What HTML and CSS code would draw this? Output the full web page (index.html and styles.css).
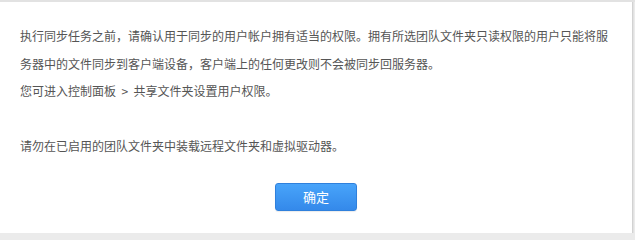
FILE: index.html
```html
<!DOCTYPE html>
<html lang="zh-CN">
<head>
<meta charset="utf-8">
<link rel="stylesheet" href="styles.css">
</head>
<body>
<div class="backdrop"></div>
<div class="dialog">
  <div class="content">
    <p class="msg">执行同步任务之前，请确认用于同步的用户帐户拥有适当的权限。拥有所选团队文件夹只读权限的用户只能将服务器中的文件同步到客户端设备，客户端上的任何更改则不会被同步回服务器。<br>您可进入控制面板&nbsp;&nbsp;&gt;&nbsp;&nbsp;共享文件夹设置用户权限。</p>
    <p class="msg msg-gap">请勿在已启用的团队文件夹中装载远程文件夹和虚拟驱动器。</p>
  </div>
  <div class="actions">
    <button class="btn-primary">确定</button>
  </div>
</div>
</body>
</html>
```
FILE: styles.css
```css
html, body {
  margin: 0;
  padding: 0;
}
body {
  width: 635px;
  height: 233px;
  overflow: hidden;
  background: #ebebeb;
  font-family: "Noto Sans CJK SC", "Noto Sans", "Liberation Sans", sans-serif;
}
.backdrop {
  height: 2px;
  width: 635px;
  background: #e2e2e2;
}
.dialog {
  width: 632px;
  height: 231px;
  background: #ffffff;
  box-shadow: 1px 0 0 #d2d2d2, 2px 0 0 #e2e2e2;
  display: flex;
  flex-direction: column;
}
.content {
  padding: 20px 0 0 20px;
  width: 596px;
}
.msg {
  margin: 0;
  font-size: 12px;
  line-height: 27.5px;
  color: #555555;
}
.msg-gap {
  margin-top: 27.5px;
}
.actions {
  display: flex;
  justify-content: center;
  padding-top: 23px;
}
.btn-primary {
  width: 82px;
  height: 28px;
  border: 1px solid #2f80dc;
  border-radius: 3px;
  background: linear-gradient(#48a4fa, #3489ea);
  color: #ffffff;
  font-family: "Noto Sans CJK SC", "Noto Sans", sans-serif;
  font-size: 13px;
  line-height: 26px;
  padding: 0;
  box-shadow: 0 1px 1px rgba(0,0,0,0.08);
}
```
